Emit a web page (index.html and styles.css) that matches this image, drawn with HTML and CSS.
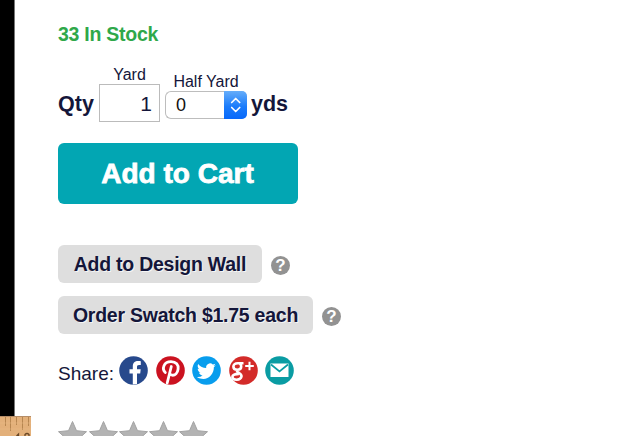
FILE: index.html
```
<!DOCTYPE html>
<html lang="en">
<head>
  <meta charset="UTF-8">
  <meta name="viewport" content="width=device-width, initial-scale=1.0">
  <title>Add to Cart</title>
  <link rel="stylesheet" href="styles.css">
</head>
<body>
  <div class="page">
    <div class="side">
      <div class="side-bar"></div>
      <svg class="ruler" width="31" height="20" viewBox="0 0 31 20">
        <rect width="31" height="20" fill="#e3b07a"/>
        <rect width="31" height="1" fill="#b58d68"/>
        <path d="M5.500 1v9M10.500 1v14M16.500 1v8M22.500 1v13M28.500 1v9" stroke="#b78650" stroke-width="1"/>
        <path d="M0 13h31M0 7h31" stroke="#eabb88" stroke-width="1" opacity=".5"/>
        <path d="M16.500 20l2-2v2M25 20v-1.500q2-2 4 0v1.500" fill="none" stroke="#6b4826" stroke-width="1.300"/>
      </svg>
    </div>

    <div class="product">
      <div class="stock">33 In Stock</div>

      <div class="qty">
        <span class="qty-label">Qty</span>
        <label class="field yard">
          <span>Yard</span>
          <span class="input">1</span>
        </label>
        <label class="field half">
          <span>Half Yard</span>
          <span class="select">
            <span class="value">0</span>
            <svg class="arrows" width="23" height="28" viewBox="0 0 23 28">
              <path d="M7.700 11.500l4-4 4 4M7.700 16.500l4 4 4-4" fill="none" stroke="#fff" stroke-width="1.700" stroke-linecap="round" stroke-linejoin="round"/>
            </svg>
          </span>
        </label>
        <span class="qty-unit">yds</span>
      </div>

      <button class="cart">Add to Cart</button>

      <div class="row wall">
        <button class="btn">Add to Design Wall</button>
        <span class="help">?</span>
      </div>
      <div class="row swatch">
        <button class="btn">Order Swatch $1.75 each</button>
        <span class="help">?</span>
      </div>

      <div class="share">
        <span class="share-label">Share:</span>
        <svg width="29" height="29" viewBox="0 0 29 29">
          <circle cx="14.500" cy="14.500" r="14.300" fill="#27498c"/>
          <path d="M13.800 28.600V17.500H10.500v-4.200h3.300v-2.900c0-3.600 2.200-5.300 5.300-5.300 1.400 0 2.300.1 2.700.2v3.700h-1.800c-1.600 0-2 .8-2 1.900v2.400h3.700l-.5 4.200h-3.200v10.500z" fill="#fff"/>
        </svg>
        <svg width="29" height="29" viewBox="0 0 29 29">
          <circle cx="14.500" cy="14.500" r="14.300" fill="#cb1220"/>
          <path d="M9.300 16.500C5.700 13 7.500 5.600 15 5.600c5.200 0 7.700 3.400 7.100 7.400-.5 4-3.100 6.500-5.900 6.200-1.300-.2-2.200-.9-2.500-1.600M15.300 10.500L11.200 27" fill="none" stroke="#fff" stroke-width="2.800" stroke-linecap="round"/>
        </svg>
        <svg width="29" height="29" viewBox="0 0 29 29">
          <circle cx="14.500" cy="14.500" r="14.300" fill="#089ded"/>
          <path d="M23.800 9.200c-.7.300-1.400.5-2.200.6.800-.5 1.400-1.200 1.700-2.100-.7.400-1.600.8-2.500.9a3.900 3.900 0 0 0-6.600 3.500c-3.200-.1-6.100-1.700-8-4.100-1 1.800-.5 4 1.200 5.200-.6 0-1.200-.2-1.700-.5 0 1.900 1.300 3.500 3.100 3.900-.6.100-1.200.2-1.800.1.500 1.500 1.900 2.600 3.600 2.700a7.900 7.900 0 0 1-5.700 1.600c8.400 5.200 17-.5 17-9.900.8-.5 1.400-1.200 1.900-1.900z" fill="#fff"/>
        </svg>
        <svg width="29" height="29" viewBox="0 0 29 29">
          <circle cx="14.500" cy="14.500" r="14.300" fill="#d32b29"/>
          <path d="M14.500 7.300H8.700c-2.700 0-4.300 1.300-4.300 3.300 0 2 1.600 3.200 3.900 3.200 2.400 0 3.900-1.300 3.900-3.200 0-1.600-.7-2.700-2-3.200M8.500 13.800c-1.300 1.500-.1 2.200 1.600 3.200 2 1.200 2.600 2.100 2.400 3.600-.4 2-2.300 3.100-4.800 3.100-2.600 0-4.300-.9-4.300-2.600 0-2 2.300-3.200 6.500-3.200" fill="none" stroke="#fff" stroke-width="2.600"/>
          <path d="M20.500 5.700v8.600M16.200 10h8.600" stroke="#fff" stroke-width="2"/>
        </svg>
        <svg width="29" height="29" viewBox="0 0 29 29">
          <circle cx="14.500" cy="14.500" r="14.300" fill="#0a9ca3"/>
          <rect x="5.500" y="7.500" width="18" height="13.500" fill="#fff"/>
          <path d="M6 8.500l8.500 7 8.500-7" fill="none" stroke="#0a9ca3" stroke-width="1.700"/>
        </svg>
      </div>

      <div class="stars">
        <svg width="152" height="15" viewBox="0 0 152 15">
          <defs>
            <path id="star" d="M14.500.500l4 9.200 10 1-7.500 6.700 2.200 9.800-8.700-5-8.700 5L8 17.400.500 10.700l10-1z" fill="#b3b3b3" stroke="#a3a3a3" stroke-width="1"/>
          </defs>
          <use href="#star"/>
          <use href="#star" x="31"/>
          <use href="#star" x="61"/>
          <use href="#star" x="91"/>
          <use href="#star" x="121"/>
        </svg>
      </div>
    </div>
  </div>
</body>
</html>
```

FILE: styles.css
```
* {
  box-sizing: border-box;
}
body {
  margin: 0;
  background: #fff;
  color: #14163a;
  font-family: "Liberation Sans", Arial, sans-serif;
  font-size: 19px;
}
svg {
  display: block;
  flex-shrink: 0;
}
.page {
  display: flex;
  height: 436px;
  overflow: hidden;
}

/* left edge */
.side {
  width: 31px;
  display: flex;
  flex-direction: column;
}
.side-bar {
  width: 15px;
  height: 416px;
  background: #000;
  border-right: 1px solid #777;
}

.product {
  padding: 23px 0 0 27px;
}
.stock {
  height: 22px;
  line-height: 23px;
  color: #2fa84a;
  font-size: 19.5px;
  letter-spacing: -0.25px;
  font-weight: bold;
}

/* quantity */
.qty {
  display: flex;
  align-items: flex-start;
  margin-top: 20px;
  height: 78px;
}
.qty-label,
.qty-unit {
  padding-top: 27px;
  font-size: 21.5px;
  line-height: 25px;
  font-weight: bold;
}
.qty-label {
  width: 41px;
}
.qty-unit {
  margin-left: 4px;
}
.field {
  display: flex;
  flex-direction: column;
  align-items: center;
  font-size: 16px;
  line-height: 19px;
}
.half {
  margin-left: 5px;
  padding-top: 7px;
}
.input {
  width: 61px;
  height: 38px;
  border: 1px solid #bbb;
  padding-right: 7px;
  font-size: 21px;
  line-height: 37px;
  text-align: right;
}
.select {
  display: flex;
  width: 82px;
  height: 28px;
  border: 1px solid #bdbdbd;
  border-right: 0;
  border-radius: 6px;
  font-size: 18px;
  line-height: 27px;
  color: #111;
}
.value {
  flex: 1;
  padding-left: 10px;
}
.arrows {
  margin: -1px 0;
  border-radius: 0 5px 5px 0;
  background: linear-gradient(#65adfa, #1b7cfb 55%, #0868fa);
}

/* buttons */
.cart {
  display: block;
  width: 240px;
  height: 61px;
  border: 0;
  border-radius: 6px;
  padding: 0 1px 0 0;
  background: #02a6b3;
  color: #fff;
  font: bold 28px "Liberation Sans", Arial, sans-serif;
  -webkit-text-stroke: 0.8px #fff;
}
.row {
  display: flex;
  align-items: center;
}
.wall {
  margin-top: 41px;
}
.swatch {
  margin-top: 13px;
}
.btn {
  width: 204px;
  height: 38px;
  border: 0;
  border-radius: 6px;
  padding: 0;
  background: #dedede;
  color: inherit;
  font: bold 19.5px "Liberation Sans", Arial, sans-serif;
  letter-spacing: -0.25px;
  text-shadow: 1px 1px 0 #f5f5f5;
}
.swatch .btn {
  width: 255px;
}
.help {
  width: 19px;
  height: 19px;
  margin: 2px 0 0 9px;
  border-radius: 50%;
  background: #929292;
  color: #fff;
  font-size: 17px;
  line-height: 20px;
  font-weight: bold;
  text-align: center;
}

.share {
  display: flex;
  gap: 7.500px;
  height: 29px;
  margin-top: 22px;
}
.share-label {
  width: 53.500px;
  padding-top: 6px;
  line-height: 23px;
}
.stars {
  margin-top: 36px;
}
```
